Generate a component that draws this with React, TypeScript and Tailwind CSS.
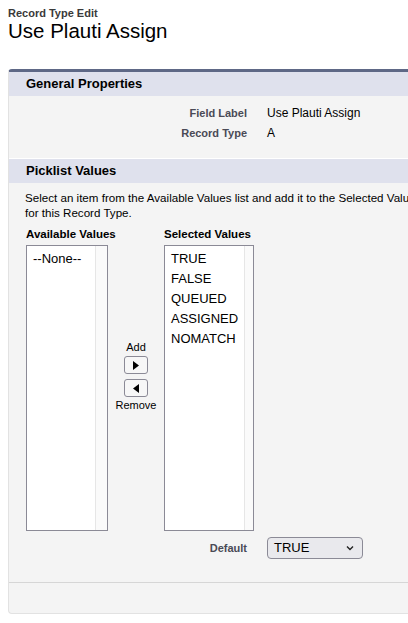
import React from 'react'

const selected = ['TRUE', 'FALSE', 'QUEUED', 'ASSIGNED', 'NOMATCH']

function ListBox({ items, width }: { items: string[]; width: string }) {
  return (
    <div className={`flex h-[286px] ${width} border border-[#8b8a96] bg-white`}>
      <div className="flex-1 px-[6px] pt-[3px] text-[13px] leading-[20px] text-black">
        {items.map(i => (
          <div key={i}>{i}</div>
        ))}
      </div>
      <div className="w-[12px] border-l border-[#e6e6e6] bg-[#fafafa]" />
    </div>
  )
}

function ArrowButton({ dir }: { dir: 'right' | 'left' }) {
  return (
    <div className="flex h-[18px] w-[24px] items-center justify-center rounded-[3px] border border-[#8b8a96] bg-[#f7f7f7]">
      <svg width="6" height="9" viewBox="0 0 6 9">
        {dir === 'right' ? <path d="M0 0 L6 4.5 L0 9 Z" fill="#000" /> : <path d="M6 0 L0 4.5 L6 9 Z" fill="#000" />}
      </svg>
    </div>
  )
}

export default function App() {
  return (
    <div className="min-h-[623px] w-[408px] overflow-hidden bg-white font-['Liberation_Sans',Arial,sans-serif] text-[#181818]">
      {/* Page title */}
      <div className="px-2 pt-[7px]">
        <div className="text-[11px] font-bold leading-[13px] text-[#3a3a3a]">Record Type Edit</div>
        <div className="text-[20.5px] leading-[22px] text-black">Use Plauti Assign</div>
      </div>

      <div className="ml-2 mt-[27px] w-[500px] rounded-[4px] border-t-[3px] border-l border-b border-[#5e6886] border-l-[#e2e2e2] border-b-[#e2e2e2] bg-[#f4f4f4]">
        {/* General Properties */}
        <div className="flex h-[24px] items-center bg-[#dfe1ed] px-[17px] text-[13px] font-bold text-black">General Properties</div>
        <div className="flex flex-col gap-[6px] pt-[10px] pb-[18px] leading-[14px]">
          <div className="flex items-center">
            <div className="w-[238px] text-right text-[11px] font-bold text-[#4a4a56]">Field Label</div>
            <div className="pl-[20px] text-[12px] text-black">Use Plauti Assign</div>
          </div>
          <div className="flex items-center">
            <div className="w-[238px] text-right text-[11px] font-bold text-[#4a4a56]">Record Type</div>
            <div className="pl-[20px] text-[12px] text-black">A</div>
          </div>
        </div>

        {/* Picklist Values */}
        <div className="flex h-[25px] items-center border-t border-white bg-[#dfe1ed] px-[17px] text-[13px] font-bold text-black">Picklist Values</div>
        <div className="w-[418px] pl-[16px] pt-[7px] text-[11.6px] leading-[15px] text-black">
          Select an item from the Available Values list and add it to the Selected Values for this Record Type.
        </div>

        <div className="flex px-[17px] pt-[6px]">
          <div className="flex w-[82px] flex-col">
            <div className="h-[19px] whitespace-nowrap text-[11.5px] font-bold text-black">Available Values</div>
            <ListBox items={['--None--']} width="w-[82px]" />
          </div>
          <div className="flex w-[56px] flex-col items-center pt-[114px] text-[11px] text-black">
            <div className="leading-[14px]">Add</div>
            <div className="mt-[2px]"><ArrowButton dir="right" /></div>
            <div className="mt-[5px]"><ArrowButton dir="left" /></div>
            <div className="leading-[16px]">Remove</div>
          </div>
          <div className="flex w-[90px] flex-col">
            <div className="h-[19px] whitespace-nowrap text-[11.5px] font-bold text-black">Selected Values</div>
            <ListBox items={selected} width="w-[90px]" />
          </div>
        </div>

        <div className="flex items-center pt-[6px] pb-[23px]">
          <div className="w-[238px] text-right text-[11px] font-bold text-[#4a4a56]">Default</div>
          <div className="ml-[20px] flex h-[22px] w-[96px] items-center justify-between rounded-[4px] border border-[#8b8a96] bg-[#e9e9ed] pl-[6px] pr-[8px] text-[13px] text-black">
            <span>TRUE</span>
            <svg width="8" height="6" viewBox="0 0 8 6">
              <path d="M1 1.5 L4 4.5 L7 1.5" fill="none" stroke="#222" strokeWidth="1.4" />
            </svg>
          </div>
        </div>

        {/* Footer */}
        <div className="h-[31px] border-t border-[#d6d6d6]" />
      </div>
    </div>
  )
}
